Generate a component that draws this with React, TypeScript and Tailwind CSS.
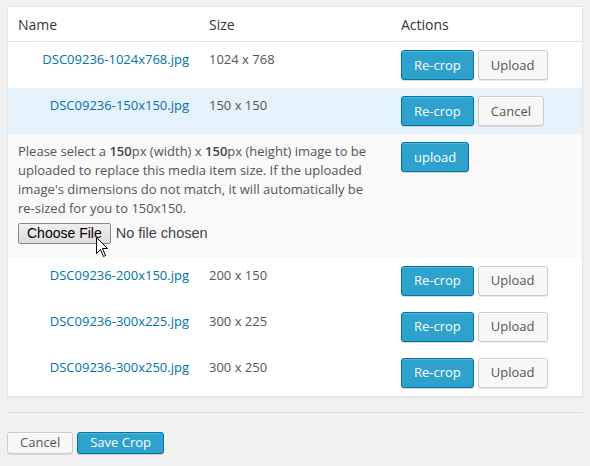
import type { ReactNode } from "react";

type Size = { file: string; dims: string };

const before: Size[] = [{ file: "DSC09236-1024x768.jpg", dims: "1024 x 768" }];
const after: Size[] = [
  { file: "DSC09236-200x150.jpg", dims: "200 x 150" },
  { file: "DSC09236-300x225.jpg", dims: "300 x 225" },
  { file: "DSC09236-300x250.jpg", dims: "300 x 250" },
];

const grid = "grid grid-cols-[191px_192px_1fr]";

function Btn({ primary, children, className = "" }: { primary?: boolean; children: ReactNode; className?: string }) {
  return (
    <button
      type="button"
      className={
        "rounded-[3px] border px-3 text-[13px] leading-none whitespace-nowrap " +
        (primary
          ? "border-[#0074a2] bg-[#2ea2cc] text-white shadow-[inset_0_1px_0_rgba(120,200,230,0.5),0_1px_0_rgba(0,0,0,0.15)] "
          : "border-[#cccccc] bg-[#f7f7f7] text-[#555555] shadow-[inset_0_1px_0_#fff,0_1px_0_rgba(0,0,0,0.08)] ") +
        className
      }
    >
      {children}
    </button>
  );
}

function SizeRow({ size, active }: { size: Size; active?: boolean }) {
  return (
    <div className={grid + " h-[46px] pt-2 " + (active ? "bg-[#e5f1fb]" : "")}>
      <a className="pr-[10px] text-right text-[13px] leading-[19px] text-[#0073aa]">{size.file}</a>
      <span className="pl-[10px] text-[13px] leading-[19px] text-[#555555]">{size.dims}</span>
      <div className="flex gap-1 pl-[10px]">
        <Btn primary className="h-[30px]">Re-crop</Btn>
        <Btn className="h-[30px]">{active ? "Cancel" : "Upload"}</Btn>
      </div>
    </div>
  );
}

// mouse pointer hovering the file button
function Cursor() {
  return (
    <svg width="13" height="21" viewBox="0 0 13 21" className="pointer-events-none absolute left-[77px] top-[13px]">
      <path d="M0.5 0.5 L0.5 16.5 L4.5 12.5 L7.5 19.5 L9.5 18.5 L6.5 11.5 L11.5 11.5 Z" fill="#fff" stroke="#000" strokeWidth="1" />
    </svg>
  );
}

export default function App() {
  return (
    <div className="min-h-[466px] bg-[#f1f1f1] px-[7px] pt-[6px] font-['Open_Sans',sans-serif]">
      <div className="border border-[#e5e5e5] bg-white shadow-[0_1px_1px_rgba(0,0,0,0.04)]">
        <div className={grid + " h-[35px] items-center border-b border-[#e1e1e1] text-[14px] text-[#32373c]"}>
          <span className="pl-[10px]">Name</span>
          <span className="pl-[10px]">Size</span>
          <span className="pl-[10px]">Actions</span>
        </div>

        {before.map((s) => (
          <SizeRow key={s.file} size={s} />
        ))}
        <SizeRow size={{ file: "DSC09236-150x150.jpg", dims: "150 x 150" }} active />

        <div className={grid + " bg-[#f9f9f9] pt-2 pb-[13px]"}>
          <div className="col-span-2 px-[10px]">
            <p className="text-[13px] leading-[19px] text-[#555555]">
              Please select a <b className="font-semibold text-[#444]">150</b>px (width) x{" "}
              <b className="font-semibold text-[#444]">150</b>px (height) image to be uploaded to replace this media
              item size. If the uploaded image&apos;s dimensions do not match, it will automatically be re-sized for
              you to 150x150.
            </p>
            <div className="mt-[5px] flex items-center gap-[5px] font-['Liberation_Sans',Arial,sans-serif] text-[14px]">
              <span className="relative h-[21px] rounded-[2px] border border-[#8a8a8a] bg-gradient-to-b from-[#f0f0f0] to-[#dcdcdc] px-[8px] leading-[19px] text-black">
                Choose File
                <Cursor />
              </span>
              <span className="text-[14.5px] text-[#444]">No file chosen</span>
            </div>
          </div>
          <div className="pl-[10px]">
            <Btn primary className="h-[30px]">upload</Btn>
          </div>
        </div>

        {after.map((s) => (
          <SizeRow key={s.file} size={s} />
        ))}
      </div>

      <div className="mt-[15px] border-t border-[#dddddd]" />

      <div className="mt-[19px] flex gap-1">
        <Btn className="h-[22px]">Cancel</Btn>
        <Btn primary className="h-[22px]">Save Crop</Btn>
      </div>
    </div>
  );
}
